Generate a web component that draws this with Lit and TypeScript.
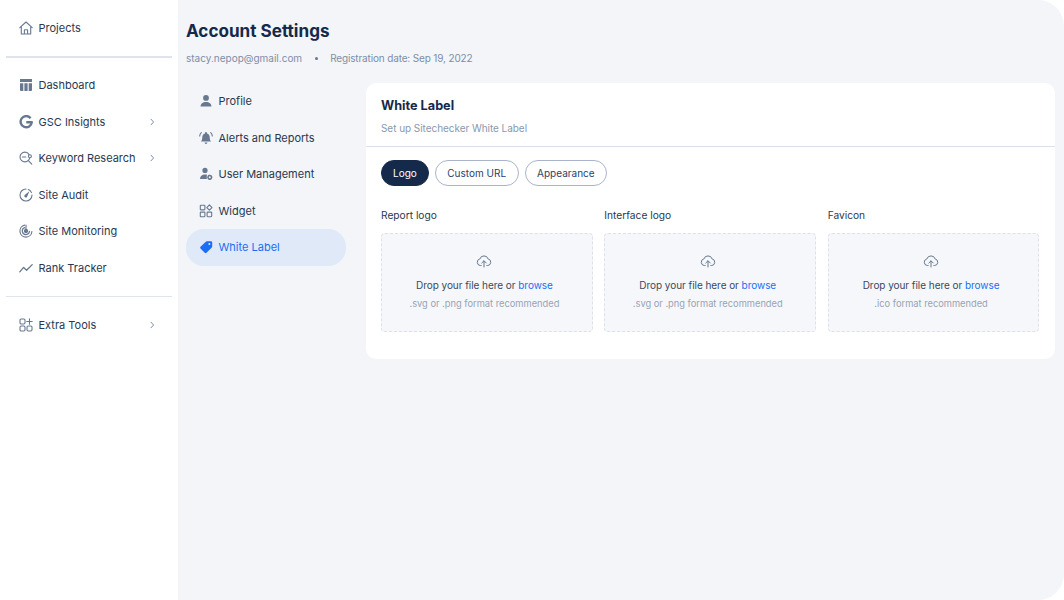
import { LitElement, html, css, svg } from "lit";
import { customElement } from "lit/decorators.js";

const I = (body: unknown, cls = "ic") => html`<svg class=${cls} viewBox="0 0 14 14" fill="none" stroke="#67788f" stroke-width="1.1" stroke-linecap="round" stroke-linejoin="round">${body}</svg>`;

const icons: Record<string, unknown> = {
  home: svg`<path d="M.8 6.600 7 1l6.200 5.600M2.300 5.500V13h9.400V5.500M5.400 13V9.300a.6.6 0 0 1 .6-.6h2a.6.6 0 0 1 .6.6V13"/>`,
  dash: svg`<path fill="#67788f" stroke="none" d="M1 1h12v3H1zM1 5.200h3.300V13H2a1 1 0 0 1-1-1zM5.400 5.200h3.200V13H5.400zM9.700 5.200H13V12a1 1 0 0 1-1 1H9.700z"/>`,
  g: svg`<path stroke-width="2.400" stroke-linecap="butt" d="M11.600 3.200A5.600 5.600 0 1 0 12.800 7.200H7.300"/>`,
  kw: svg`<circle cx="5.900" cy="6" r="4.900"/><path d="M9.400 9.600 12.800 13.200M3.400 6h3.400"/><circle cx="10.900" cy="5.200" r="1.500" fill="#fff"/>`,
  audit: svg`<path d="M7 1A6 6 0 1 0 13 7M9.300 1.500A6 6 0 0 1 12.500 4.600"/><path fill="#67788f" stroke="none" d="M10.400 3.200 8.300 8.300a1.500 1.500 0 1 1-2.300-1.500z"/>`,
  mon: svg`<path stroke-width="1.200" d="M5.600 1.200a6 6 0 1 0 7.300 6.300M5.800 3.600a3.600 3.600 0 1 0 4.700 3.700"/><circle cx="7" cy="7" r="1.600" fill="#67788f"/><path d="M7 7V1"/>`,
  rank: svg`<path stroke-width="1.300" d="M.8 10.800 4.600 6.400l3 2.800L13.200 3.600"/>`,
  extra: svg`<rect x="1" y="1" width="5" height="5" rx="1.200"/><rect x="1" y="8" width="5" height="5" rx="1.200"/><rect x="8" y="8" width="5" height="5" rx="1.200"/><path d="M10.500 .8v5.400M7.800 3.500h5.400"/>`,
  profile: svg`<circle cx="7" cy="3.900" r="2.900" fill="#67788f" stroke="none"/><path fill="#67788f" stroke="none" d="M1.600 12.600c0-3 2.200-4.600 5.400-4.600s5.400 1.600 5.400 4.600z"/>`,
  bell: svg`<path fill="#67788f" stroke="none" d="M7 1a1 1 0 0 1 1 1v.4c1.900.5 2.700 2 2.700 3.800 0 2 .5 3.200 1.300 4.300H2c.8-1.100 1.300-2.300 1.300-4.300C3.300 4.400 4.100 2.900 6 2.400V2a1 1 0 0 1 1-1zM5.600 11.500h2.800a1.400 1.400 0 0 1-2.800 0z"/><path d="M2.300 1.600C1.300 2.500.8 3.600.7 5M11.700 1.600c1 .9 1.500 2 1.600 3.400"/>`,
  user: svg`<circle cx="6" cy="3.400" r="2.600" fill="#67788f" stroke="none"/><path fill="#67788f" stroke="none" d="M1 12c0-3 2-4.600 5-4.600.7 0 1.300.1 1.800.2V12z"/><circle cx="10.800" cy="10.300" r="1.800" stroke-width="1.600" stroke-dasharray="1.400 .5"/>`,
  widget: svg`<rect x="1.300" y="1.300" width="4.600" height="4.600" rx=".6"/><rect x="1.300" y="8.100" width="4.600" height="4.600" rx=".6"/><rect x="8.100" y="8.100" width="4.600" height="4.600" rx=".6"/><path d="M10.400.9 13 3.600l-2.600 2.600-2.600-2.600z"/>`,
  tag: svg`<path fill="#1a6ef5" stroke="none" d="M8 1.200h3.900A1.300 1.300 0 0 1 13.200 2.500V6.500a1.300 1.300 0 0 1-.4.900L7.500 12.800a1.300 1.300 0 0 1-1.800 0L1.500 8.600a1.300 1.300 0 0 1 0-1.800L7.100 1.600A1.300 1.300 0 0 1 8 1.200z"/><circle cx="10.400" cy="4" r="1" fill="#dfe9f8" stroke="none"/>`,
};

@customElement("app-root")
export class AppRoot extends LitElement {
  static styles = css`
    :host { display: block; width: 1064px; height: 600px; background: #fff; font-family: "Inter", "Liberation Sans", sans-serif; color: #29384f; }
    .page { display: flex; height: 600px; }
    .side { width: 178px; flex: none; padding: 10px 6px 0; box-sizing: border-box; }
    .item { display: flex; align-items: center; height: 36.500px; padding-left: 12.500px; font-size: 11px; font-weight: 400; gap: 6px; }
    .ic { width: 14px; height: 14px; flex: none; }
    .lbl { flex: 1; white-space: nowrap; }
    .chev { width: 6px; height: 8px; margin-right: 17px; flex: none; }
    .rule { height: 1.500px; background: #dfe4ec; margin: 9.500px 0; }
    .main { flex: 1; background: #f3f5f8; border-radius: 0 26px 26px 0; padding: 18px 9px 0 8px; display: flex; flex-direction: column; }
    h1 { margin: 0; font-size: 17.100px; font-weight: 700; line-height: 26px; color: #15294b; }
    .meta { display: flex; align-items: center; margin-top: 6px; height: 16px; font-size: 10px; color: #7f8ea6; }
    .reg { letter-spacing: -.15px; }
    .dot { width: 3px; height: 3px; border-radius: 50%; background: #67788f; margin: 0 12.500px; }
    .cols { display: flex; gap: 20px; margin-top: 17px; align-items: flex-start; }
    .nav { width: 160px; flex: none; }
    .nav .active { background: #dfe9f8; border-radius: 18px; color: #1a6ef5; }
    .card { flex: 1; background: #fff; border-radius: 10px; height: 276px; }
    .head { border-bottom: 1.500px solid #dbe0ea; padding: 14px 15px 0; box-sizing: border-box; height: 64px; }
    h2 { margin: 0; font-size: 12.700px; font-weight: 700; line-height: 18px; color: #15294b; }
    .sub { margin-top: 6px; font-size: 10px; letter-spacing: -.05px; line-height: 14px; color: #8a98ae; }
    .tabs { display: flex; gap: 6px; padding: 13px 15px 0; }
    .tab { height: 26px; border-radius: 13px; border: 1px solid #a9b4c8; box-sizing: border-box; padding: 0 11.500px; display: flex; align-items: center; font-size: 10px; color: #29426b; }
    .tab.on { background: #15294b; border-color: #15294b; color: #fff; padding: 0 11px; }
    .grid { display: grid; grid-template-columns: repeat(3, 1fr); gap: 11.500px; padding: 21px 15.500px 0 15px; }
    .up-label { font-size: 10.200px; line-height: 16px; color: #29384f; margin-bottom: 10px; }
    .drop { height: 99px; box-sizing: border-box; background: #f6f7fa; border: 1px dashed #dde1e8; border-radius: 4px; display: flex; flex-direction: column; align-items: center; padding: 19px 5px 0 0; }
    .cloud { width: 16px; height: 16px; }
    .t1 { margin-top: 9px; font-size: 10px; letter-spacing: -.05px; line-height: 14px; color: #3a4960; }
    .t1 span { color: #1a6ef5; }
    .t2 { margin-top: 5px; font-size: 9.300px; line-height: 13px; color: #98a3b5; }
  `;

  private row(ic: string, label: string, arrow = false, cls = "") {
    return html`<div class="item ${cls}">${I(icons[ic])}<span class="lbl">${label}</span>${arrow ? html`<svg class="chev" viewBox="0 0 6 8" fill="none" stroke="#7f8ea6" stroke-width="1" stroke-linecap="round" stroke-linejoin="round"><path d="M2 1.200 4.600 4 2 6.800"/></svg>` : ""}</div>`;
  }

  private drop(label: string, note: string) {
    return html`<div>
      <div class="up-label">${label}</div>
      <div class="drop">
        <svg class="cloud" viewBox="0 0 16 16" fill="none" stroke="#67788f" stroke-width="1" stroke-linecap="round" stroke-linejoin="round"><path d="M5.200 12.500H4.300A3.300 3.300 0 0 1 3.800 6 4.400 4.400 0 0 1 12.200 6a3.300 3.300 0 0 1-.5 6.500h-.9"/><path d="M8 14V8M5.800 10 8 7.800 10.200 10"/></svg>
        <div class="t1">Drop your file here or <span>browse</span></div>
        <div class="t2">${note}</div>
      </div>
    </div>`;
  }

  render() {
    return html`<div class="page">
      <aside class="side">
        ${this.row("home", "Projects")}
        <div class="rule"></div>
        ${this.row("dash", "Dashboard")}
        ${this.row("g", "GSC Insights", true)}
        ${this.row("kw", "Keyword Research", true)}
        ${this.row("audit", "Site Audit")}
        ${this.row("mon", "Site Monitoring")}
        ${this.row("rank", "Rank Tracker")}
        <div class="rule"></div>
        ${this.row("extra", "Extra Tools", true)}
      </aside>
      <main class="main">
        <h1>Account Settings</h1>
        <div class="meta"><span>stacy.nepop@gmail.com</span><i class="dot"></i><span class="reg">Registration date: Sep 19, 2022</span></div>
        <div class="cols">
          <nav class="nav">
            ${this.row("profile", "Profile")}
            ${this.row("bell", "Alerts and Reports")}
            ${this.row("user", "User Management")}
            ${this.row("widget", "Widget")}
            ${this.row("tag", "White Label", false, "active")}
          </nav>
          <section class="card">
            <div class="head"><h2>White Label</h2><div class="sub">Set up Sitechecker White Label</div></div>
            <div class="tabs"><div class="tab on">Logo</div><div class="tab">Custom URL</div><div class="tab">Appearance</div></div>
            <div class="grid">
              ${this.drop("Report logo", ".svg or .png format recommended")}
              ${this.drop("Interface logo", ".svg or .png format recommended")}
              ${this.drop("Favicon", ".ico format recommended")}
            </div>
          </section>
        </div>
      </main>
    </div>`;
  }
}
